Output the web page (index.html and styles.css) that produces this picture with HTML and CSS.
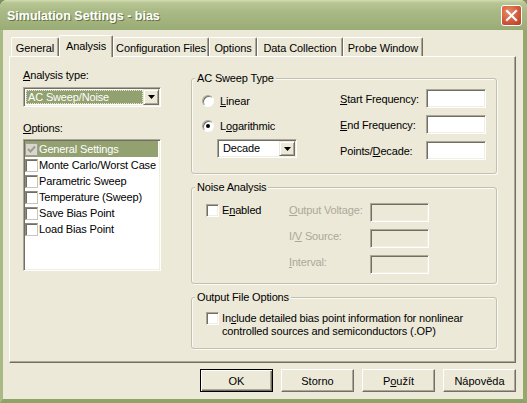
FILE: index.html
```html
<!DOCTYPE html>
<html>
<head>
<meta charset="utf-8">
<link rel="stylesheet" href="styles.css">
</head>
<body>
<div class="window">
  <div class="titlebar">
    <span class="title">Simulation Settings - bias</span>
    <div class="close"><svg width="21" height="21" viewBox="0 0 21 21"><path d="M6 6 L15 15 M15 6 L6 15" stroke="#fff" stroke-width="2.2" stroke-linecap="square"/></svg></div>
  </div>
  <div class="frame">
    <div class="tabs">
      <div class="tab t-general">General</div>
      <div class="tab sel t-analysis">Analysis</div>
      <div class="tab t-config">Configuration Files</div>
      <div class="tab t-options">Options</div>
      <div class="tab t-data">Data Collection</div>
      <div class="tab t-probe">Probe Window</div>
    </div>
    <div class="panel">
      <div class="left">
        <div class="label"><u>A</u>nalysis type:</div>
        <div class="combo wide">
          <div class="value selected"><span class="focus">AC Sweep/Noise</span></div>
          <div class="dropbtn"><svg width="7" height="4" viewBox="0 0 7 4"><polygon points="0,0 7,0 3.5,4" fill="#000"/></svg></div>
        </div>
        <div class="label opt-label"><u>O</u>ptions:</div>
        <div class="listbox">
          <div class="item sel"><span class="cb grayed"><svg width="9" height="9" viewBox="0 0 9 9"><path d="M1 4 L3.5 6.5 L8 1.5" stroke="#9c9c94" stroke-width="2" fill="none"/></svg></span>General Settings</div>
          <div class="item"><span class="cb"></span>Monte Carlo/Worst Case</div>
          <div class="item"><span class="cb"></span>Parametric Sweep</div>
          <div class="item"><span class="cb"></span>Temperature (Sweep)</div>
          <div class="item"><span class="cb"></span>Save Bias Point</div>
          <div class="item"><span class="cb"></span>Load Bias Point</div>
        </div>
      </div>
      <div class="right">
        <div class="group ac">
          <div class="legend">AC Sweep Type</div>
          <div class="ac-body">
            <div class="ac-left">
              <div class="radio-row"><span class="radio"></span><span><u>L</u>inear</span></div>
              <div class="radio-row second"><span class="radio on"></span><span>L<u>o</u>garithmic</span></div>
              <div class="combo small">
                <div class="value">Decade</div>
                <div class="dropbtn"><svg width="7" height="4" viewBox="0 0 7 4"><polygon points="0,0 7,0 3.5,4" fill="#000"/></svg></div>
              </div>
            </div>
            <div class="ac-right">
              <div class="flabel"><u>S</u>tart Frequency:</div><div class="textbox"></div>
              <div class="flabel"><u>E</u>nd Frequency:</div><div class="textbox"></div>
              <div class="flabel">Points/<u>D</u>ecade:</div><div class="textbox"></div>
            </div>
          </div>
        </div>
        <div class="group noise">
          <div class="legend">Noise Analysis</div>
          <div class="noise-body">
            <div class="noise-left">
              <div class="check-row"><span class="cb flat"></span><span>E<u>n</u>abled</span></div>
            </div>
            <div class="noise-right">
              <div class="flabel dis"><u>O</u>utput Voltage:</div><div class="textbox dis"></div>
              <div class="flabel dis">I/<u>V</u> Source:</div><div class="textbox dis"></div>
              <div class="flabel dis"><u>I</u>nterval:</div><div class="textbox dis"></div>
            </div>
          </div>
        </div>
        <div class="group output">
          <div class="legend">Output File Options</div>
          <div class="out-body">
            <span class="cb flat"></span>
            <div class="out-text">In<u>c</u>lude detailed bias point information for nonlinear<br>controlled sources and semiconductors (.OP)</div>
          </div>
        </div>
      </div>
    </div>
    <div class="buttons">
      <div class="btn default">OK</div>
      <div class="btn">Storno</div>
      <div class="btn">P<u>o</u>užít</div>
      <div class="btn">Nápověda</div>
    </div>
  </div>
</div>
</body>
</html>
```
FILE: styles.css
```css
html, body {
  margin: 0;
  padding: 0;
  background: #7f8f5e;
}
body {
  font-family: "Liberation Sans", Arial, sans-serif;
  font-size: 11px;
  color: #000;
}
u { text-decoration: underline; text-underline-offset: 1px; }

.window {
  width: 527px;
  height: 403px;
  display: flex;
  flex-direction: column;
  background: #ECE9D8;
  border-radius: 7px 7px 0 0;
  overflow: hidden;
}

.titlebar {
  height: 30px;
  box-sizing: border-box;
  display: flex;
  align-items: center;
  justify-content: space-between;
  padding: 2px 5px 0 7px;
  background: linear-gradient(#d2dcb0 0px, #b7c593 3px, #a8b985 12px, #a1b27d 22px, #9aac76 30px);
}
.title {
  color: #fff;
  font-weight: bold;
  font-size: 12.5px;
  text-shadow: 1px 1px 0 #66743f;
}
.close {
  width: 21px;
  height: 21px;
  box-sizing: border-box;
  border: 1px solid #fff;
  border-radius: 3px;
  background: radial-gradient(circle at 35% 30%, #e98a67 0%, #d15a3b 55%, #b73a22 100%);
  display: flex;
  margin-bottom: 2px;
}
.close svg { margin: -1px; }

.frame {
  flex: 1;
  display: flex;
  flex-direction: column;
  border-style: solid;
  border-color: #a5b781 #93a86c #8ea467 #a9ba84;
  border-width: 0 4px 4px 3px;
  padding: 5px 7px 0 6px;
}

.tabs {
  display: flex;
  align-items: flex-end;
  height: 21px;
  padding-left: 2px;
  letter-spacing: -0.1px;
}
.tab {
  height: 19px;
  box-sizing: border-box;
  display: flex;
  justify-content: center;
  align-items: center;
  padding-top: 1px;
  border-top: 1px solid #fff;
  border-left: 1px solid #fff;
  border-right: 1px solid #716F64;
  box-shadow: inset -1px 0 #ACA899;
  border-radius: 2px 2px 0 0;
  background: #ECE9D8;
}
.tab.sel {
  height: 22px;
  margin-bottom: -1px;
  padding-top: 0;
  padding-bottom: 2px;
  position: relative;
  z-index: 1;
}
.t-general { width: 48px; }
.t-analysis { width: 54px; }
.t-config { width: 96px; }
.t-options { width: 48px; }
.t-data { width: 86px; }
.t-probe { width: 80px; }

.panel {
  height: 307px;
  box-sizing: border-box;
  border-top: 1px solid #fff;
  border-left: 1px solid #fff;
  border-right: 1px solid #716F64;
  border-bottom: 1px solid #716F64;
  box-shadow: inset -1px -1px #ACA899;
  padding: 12px 0 0 13px;
  display: flex;
  gap: 30px;
  letter-spacing: -0.15px;
}

.left {
  width: 138px;
  display: flex;
  flex-direction: column;
}
.label { line-height: 13px; height: 13px; }
.opt-label { margin-top: 15px; }

.combo {
  box-sizing: border-box;
  display: flex;
  align-items: stretch;
  border: 1px solid;
  border-color: #ACA899 #fff #fff #ACA899;
  box-shadow: inset 1px 1px #716F64, inset -1px -1px #F1EFE2;
  padding: 2px;
  background: #fff;
}
.combo.wide { margin-top: 5px; height: 20px; width: 138px; }
.combo .value {
  flex: 1;
  line-height: 14px;
  padding-left: 1px;
  white-space: nowrap;
  overflow: hidden;
}
.combo .value.selected {
  background: #93A070;
  color: #fff;
  padding: 0;
}
.combo .value .focus {
  display: block;
  height: 100%;
  box-sizing: border-box;
  outline: 1px dotted #e8e8d8;
  outline-offset: -1px;
  padding-left: 2px;
  line-height: 14px;
}
.dropbtn {
  width: 16px;
  box-sizing: border-box;
  background: #ECE9D8;
  border: 1px solid;
  border-color: #ECE9D8 #716F64 #716F64 #ECE9D8;
  box-shadow: inset 1px 1px #fff, inset -1px -1px #ACA899;
  display: flex;
  align-items: center;
  justify-content: center;
  margin: -1px -1px -1px 0;
}
.combo.small {
  margin-top: 5px;
  margin-left: 15px;
  width: 80px;
  height: 19px;
}
.combo.small .value { padding-left: 3px; line-height: 13px; }

.listbox {
  margin-top: 4px;
  height: 132px;
  box-sizing: border-box;
  border: 1px solid;
  border-color: #ACA899 #fff #fff #ACA899;
  box-shadow: inset 1px 1px #716F64, inset -1px -1px #F1EFE2;
  background: #fff;
  padding: 1px 2px 0 1px;
  display: flex;
  flex-direction: column;
}
.item {
  height: 16px;
  display: flex;
  align-items: center;
  gap: 1px;
  white-space: nowrap;
}
.item.sel { background: #93A070; color: #fff; }

.cb {
  width: 13px;
  height: 13px;
  box-sizing: border-box;
  flex: none;
  border: 1px solid;
  border-color: #8e8c80 #c8c6b8 #c8c6b8 #8e8c80;
  box-shadow: inset 1px 1px #6f6d62;
  background: #fff;
  display: flex;
  align-items: center;
  justify-content: center;
}
.cb.grayed { background: #d9d7ca; border-color: #a09e92; box-shadow: none; }
.cb.flat {
  border-color: #ACA899 #fff #fff #ACA899;
  box-shadow: inset 1px 1px #716F64, inset -1px -1px #F1EFE2;
}

.right {
  width: 306px;
  display: flex;
  flex-direction: column;
}
.group {
  box-sizing: border-box;
  border: 1px solid #c2c0ae;
  border-radius: 3px;
  box-shadow: 1px 1px 0 #fbfaf5, inset 1px 1px 0 #fbfaf5;
}
.legend {
  margin: -7px 0 0 3px;
  padding: 0 2px;
  width: fit-content;
  line-height: 13px;
  background: #ECE9D8;
}
.ac { margin-top: 9px; height: 96px; }
.noise { margin-top: 13px; height: 97px; }
.output { margin-top: 13px; height: 52px; }

.ac-body { display: flex; padding-left: 10px; }
.ac-left {
  width: 138px;
  padding-top: 8px;
  display: flex;
  flex-direction: column;
}
.radio-row {
  height: 16px;
  display: flex;
  align-items: center;
  gap: 6px;
}
.radio-row.second { margin-top: 9px; }
.radio {
  width: 12px;
  height: 12px;
  box-sizing: border-box;
  border-radius: 50%;
  background: #fff;
  border: 1px solid;
  border-color: #ACA899 #fff #fff #ACA899;
  box-shadow: inset 1px 1px #716F64;
  display: flex;
  align-items: center;
  justify-content: center;
}
.radio.on::after {
  content: "";
  width: 4px;
  height: 4px;
  border-radius: 50%;
  background: #000;
}
.ac-right {
  padding-top: 4px;
  display: grid;
  grid-template-columns: 86px 60px;
  grid-auto-rows: 19px;
  row-gap: 7px;
}
.flabel {
  line-height: 19px;
  padding-top: 1px;
  white-space: nowrap;
}
.flabel.dis { color: #ACA899; line-height: 15px; padding-top: 0; }
.textbox {
  box-sizing: border-box;
  border: 1px solid;
  border-color: #ACA899 #fff #fff #ACA899;
  box-shadow: inset 1px 1px #716F64, inset -1px -1px #F1EFE2;
  background: #fff;
}
.textbox.dis { background: #ECE9D8; }

.noise-body { display: flex; padding-top: 9px; }
.noise-left { width: 83px; padding-left: 14px; }
.check-row {
  height: 14px;
  display: flex;
  align-items: center;
  gap: 3px;
}
.noise-right {
  display: grid;
  grid-template-columns: 81px 59px;
  grid-auto-rows: 19px;
  row-gap: 7px;
}

.out-body {
  display: flex;
  align-items: flex-start;
  gap: 3px;
  padding: 8px 0 0 14px;
}
.out-text { line-height: 13px; }

.buttons {
  display: flex;
  justify-content: flex-end;
  gap: 8px;
  margin-top: 6px;
}
.btn {
  width: 73px;
  height: 23px;
  box-sizing: border-box;
  display: flex;
  align-items: center;
  justify-content: center;
  background: #ECE9D8;
  border: 1px solid;
  border-color: #fff #716F64 #716F64 #fff;
  box-shadow: inset -1px -1px #ACA899;
}
.btn.default {
  border: 1px solid #000;
  box-shadow: inset 1px 1px #fff, inset -1px -1px #716F64, inset -2px -2px #ACA899;
}
```
